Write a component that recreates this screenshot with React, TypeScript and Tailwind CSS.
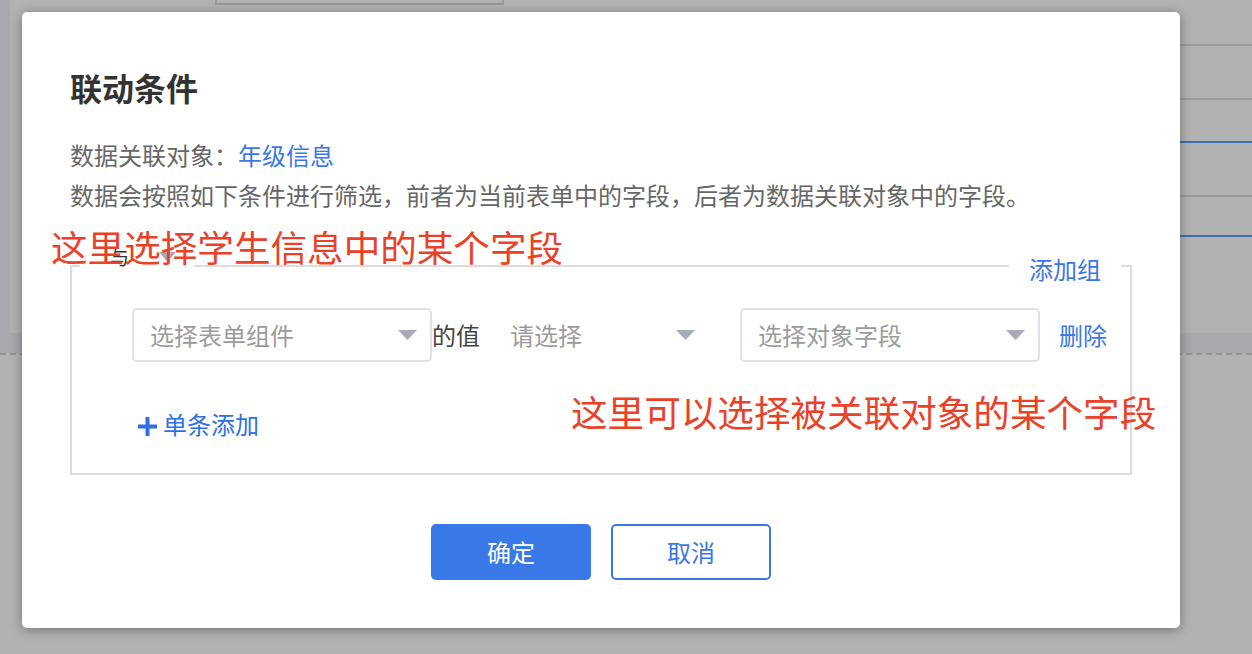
import React from "react";

const Caret = () => (
  <svg width="19" height="10" viewBox="0 0 19 10" className="shrink-0">
    <path d="M0 0h19L9.5 10z" fill="#a5abb8" />
  </svg>
);

interface SelectProps {
  placeholder: string;
  className: string;
}

const Select = ({ placeholder, className }: SelectProps) => (
  <div
    className={`h-[54px] border-2 rounded-[5px] pl-[16px] pr-[13px] flex items-center justify-between ${className}`}
  >
    <span className="text-[24px] leading-[40px] text-[#9b9b9b]">{placeholder}</span>
    <Caret />
  </div>
);

export default function App() {
  return (
    <div className="relative w-[1252px] h-[654px] overflow-hidden bg-white font-['Noto_Sans_CJK_SC','Noto_Sans',sans-serif]">
      {/* page behind the dialog */}
      <div className="h-[353px] bg-[#f1f3f8]">
        <div className="ml-[10px] h-[333px] bg-white flex flex-col">
          <div className="ml-[205px] w-[289px] h-[5px] border-2 border-t-0 border-[#dcdcdc]" />
          <div className="ml-auto w-[400px] flex flex-col">
            <div className="h-[41px] border-b-2 border-[#dfdfdf]" />
            <div className="h-[54px] border-b-2 border-[#dfdfdf]" />
            <div className="h-[43px] border-b-2 border-[#5b9bff]" />
            <div className="h-[54px] border-b-2 border-[#dfdfdf]" />
            <div className="h-[40px] border-b-2 border-[#5b9bff]" />
          </div>
        </div>
      </div>
      <div className="border-t-2 border-dashed border-[#d6d6d6]" />

      {/* overlay */}
      <div className="absolute inset-0 bg-black/30" />

      {/* dialog */}
      <div className="absolute left-[22px] top-[12px] w-[1158px] h-[616px] bg-white rounded-[5px] shadow-[0_2px_12px_rgba(0,0,0,0.35)] px-[48px] pt-[55px] flex flex-col">
        <h2 className="text-[32px] leading-[40px] font-bold text-[#333]">联动条件</h2>
        <div className="mt-[28px] text-[24px] leading-[40px] text-[#666]">
          <p>
            数据关联对象：<span className="text-[#3a77e9]">年级信息</span>
          </p>
          <p>数据会按照如下条件进行筛选，前者为当前表单中的字段，后者为数据关联对象中的字段。</p>
        </div>

        {/* condition group */}
        <div className="relative mt-[50px] h-[210px] border-2 border-[#dcdcdc] flex flex-col">
          <div className="absolute left-[8px] top-[-24px] w-[114px] h-[28px] bg-white flex items-center pl-[30px] gap-[30px]">
            <span className="text-[19px] leading-[20px] text-[#333]">与</span>
            <svg width="17" height="10" viewBox="0 0 17 10">
              <path d="M0 0h17L8.5 10z" fill="#a5abb8" />
            </svg>
          </div>
          <div className="absolute right-[9px] top-[-18px] w-[112px] h-[40px] bg-white flex items-center justify-center">
            <span className="text-[24px] leading-[40px] text-[#3a77e9]">添加组</span>
          </div>

          <div className="pl-[60px] pt-[41px] flex items-center">
            <Select placeholder="选择表单组件" className="w-[300px] border-[#dfe2e8]" />
            <span className="text-[24px] leading-[40px] text-[#444]">的值</span>
            <Select placeholder="请选择" className="ml-[12px] w-[218px] border-transparent" />
            <Select placeholder="选择对象字段" className="ml-[30px] w-[300px] border-[#dfe2e8]" />
            <span className="ml-[19px] text-[24px] leading-[40px] text-[#3a77e9]">删除</span>
          </div>

          <div className="mt-[42px] ml-[66px] flex items-center gap-[6px] text-[#2f6fe6]">
            <svg width="19" height="19" viewBox="0 0 19 19" className="shrink-0 mt-[4px]">
              <path d="M7.5 0h4v7.5H19v4h-7.5V19h-4v-7.5H0v-4h7.5z" fill="#2f6fe6" />
            </svg>
            <span className="text-[24px] leading-[40px]">单条添加</span>
          </div>
        </div>

        {/* footer buttons */}
        <div className="mt-[49px] flex justify-center gap-[20px]">
          <button className="w-[160px] h-[56px] rounded-[5px] bg-[#3b78e7] text-white text-[24px]">确定</button>
          <button className="w-[160px] h-[56px] rounded-[5px] border-2 border-[#3b78e7] bg-white text-[#3b78e7] text-[24px]">
            取消
          </button>
        </div>
      </div>

      {/* annotations */}
      <div className="absolute left-[51px] top-[229px] text-[36.6px] leading-[36px] text-[#ea4128]">
        这里选择学生信息中的某个字段
      </div>
      <div className="absolute left-[571px] top-[394px] text-[36.6px] leading-[36px] text-[#ea4128]">
        这里可以选择被关联对象的某个字段
      </div>
    </div>
  );
}
